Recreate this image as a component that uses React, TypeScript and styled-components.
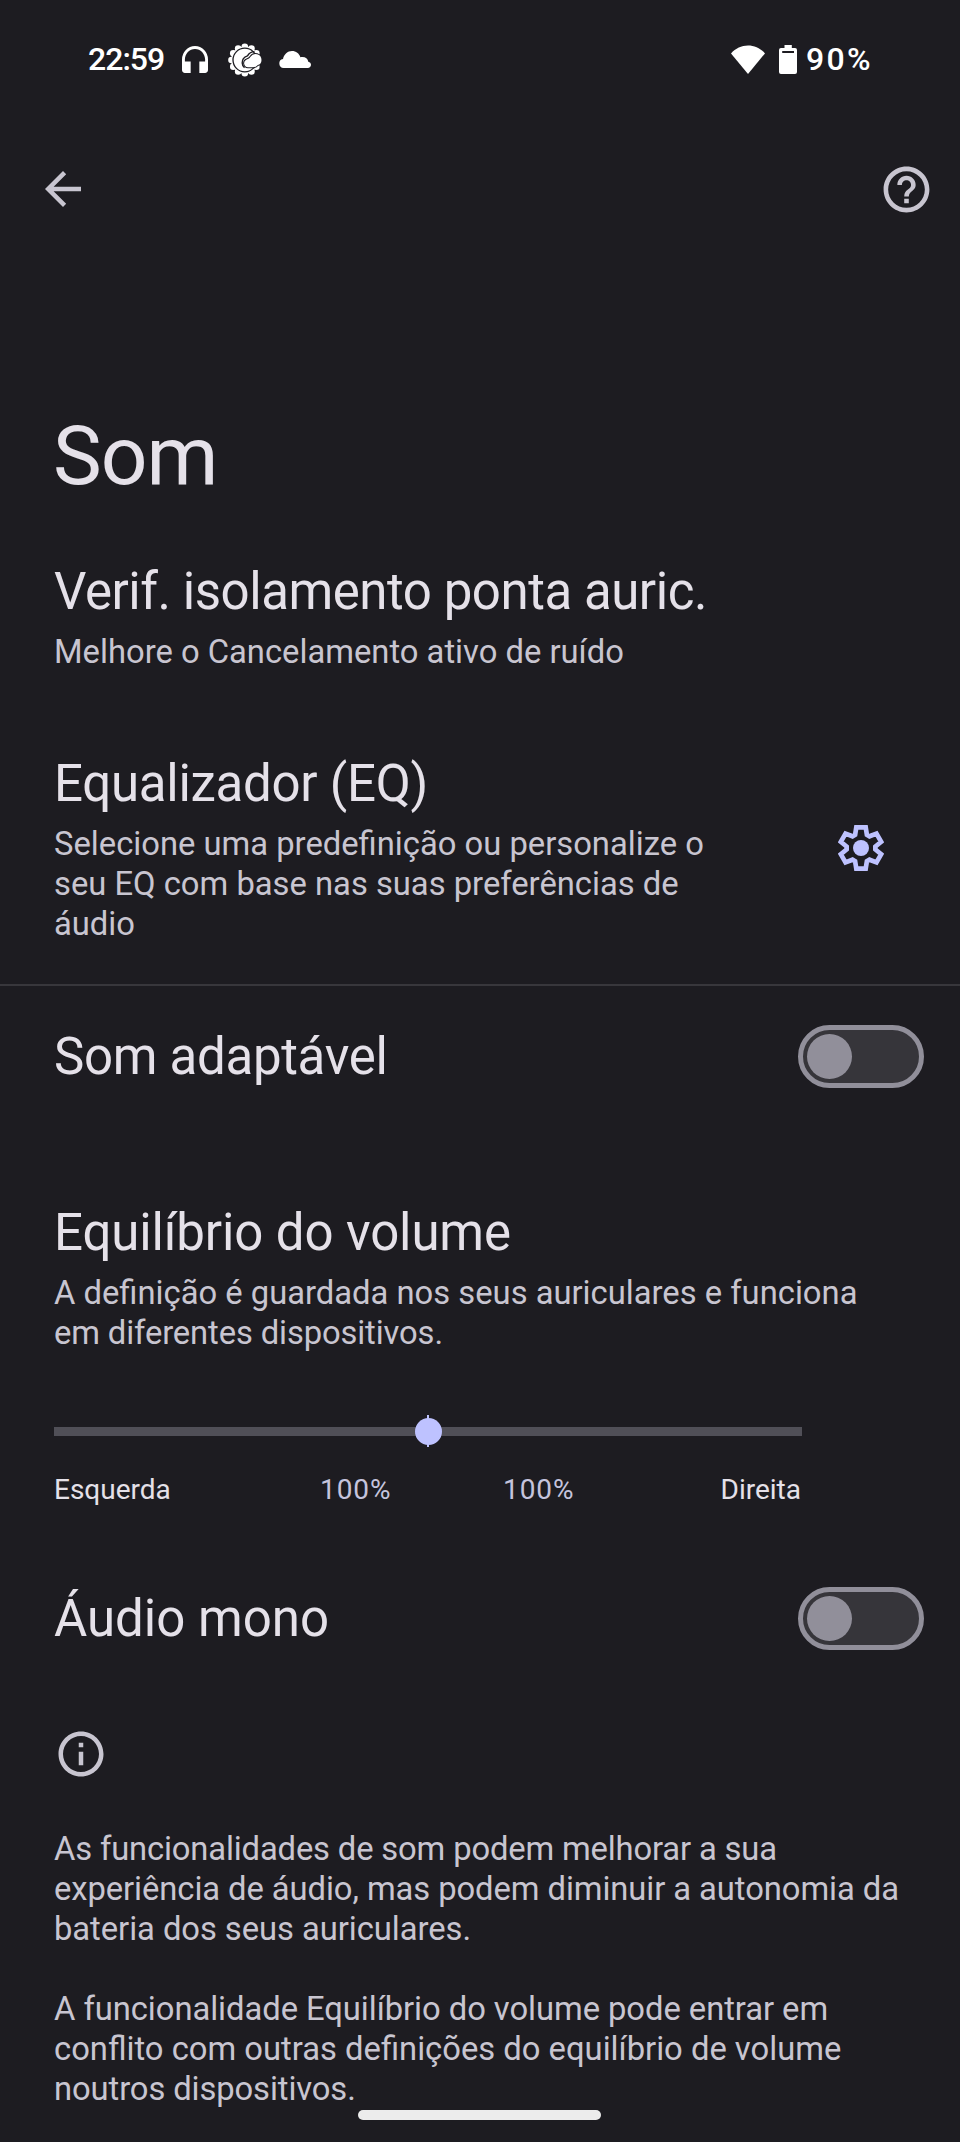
import React, { useState } from "react";
import styled, { createGlobalStyle } from "styled-components";

const color = {
  background: "#1d1c21",
  title: "#e5e1e9",
  body: "#c8c5d0",
  accent: "#bec2ff",
  value: "#c5c4dd",
  outline: "#918f9a",
  switchTrack: "#36353a",
  divider: "#38373c",
  sliderTrack: "#504f57",
};

const GlobalStyle = createGlobalStyle`
  *, *::before, *::after { box-sizing: border-box; }
  body {
    margin: 0;
    background: ${color.background};
    font-family: Roboto, "Liberation Sans", sans-serif;
  }
  h1, h2, p { margin: 0; font-weight: 400; }
  svg { display: block; flex: none; }
`;

const Screen = styled.div`
  position: relative;
  display: flex;
  flex-direction: column;
  width: 960px;
  height: 2142px;
  overflow: hidden;
  background: ${color.background};
`;

const StatusBar = styled.div`
  display: flex;
  justify-content: space-between;
  align-items: center;
  height: 118px;
  padding: 0 89px 0 88px;
  color: #fff;
  font-size: 32px;
  font-weight: 500;
  line-height: 40px;
`;

const StatusGroup = styled.div`
  display: flex;
  align-items: center;
`;

const Clock = styled.span`
  width: 94px;
  letter-spacing: -1px;
`;

const BatteryLevel = styled.span`
  width: 65px;
  margin-left: 9px;
  letter-spacing: 2.3px;
  white-space: nowrap;
`;

const AppBar = styled.header`
  display: flex;
  justify-content: space-between;
  align-items: center;
  height: 142px;
  padding: 0 26px 0 36px;
  color: ${color.body};
`;

const IconButton = styled.button`
  display: flex;
  padding: 0;
  border: 0;
  background: none;
  color: inherit;
`;

const PageTitle = styled.h1`
  margin: 148px 0 58px 53px;
  color: ${color.title};
  font-size: 82px;
  line-height: 96px;
  letter-spacing: -1px;
`;

const Setting = styled.section<{ $bottom: number }>`
  display: flex;
  padding: 0 0 ${(p) => p.$bottom}px 54px;
`;

const SettingText = styled.div<{ $width?: number }>`
  display: flex;
  flex-direction: column;
  gap: 10px;
  width: ${(p) => (p.$width ? `${p.$width}px` : "auto")};
`;

const Heading = styled.h2<{ $tracking?: number }>`
  color: ${color.title};
  font-size: 51px;
  line-height: 60px;
  letter-spacing: ${(p) => (p.$tracking ? `${p.$tracking}px` : "normal")};
  white-space: nowrap;
`;

const Copy = styled.p`
  color: ${color.body};
  font-size: 32.75px;
  line-height: 40px;
`;

const Line = styled.span<{ $tracking?: number }>`
  display: block;
  letter-spacing: ${(p) => (p.$tracking ? `${p.$tracking}px` : "normal")};
  white-space: nowrap;
`;

const GearSlot = styled.div`
  display: flex;
  align-items: center;
  width: 46px;
  margin-left: 44px;
  padding-bottom: 3px;
`;

const Divider = styled.hr`
  width: 100%;
  height: 2px;
  margin: 0 0 39px;
  border: 0;
  background: ${color.divider};
`;

const ToggleRow = styled.section<{ $bottom: number }>`
  display: flex;
  justify-content: space-between;
  align-items: center;
  height: 63px;
  margin-bottom: ${(p) => p.$bottom}px;
  padding: 0 36px 0 54px;
`;

const SwitchTrack = styled.button<{ $on: boolean }>`
  display: flex;
  align-items: center;
  justify-content: ${(p) => (p.$on ? "flex-end" : "flex-start")};
  width: 126px;
  height: 63px;
  padding: 0 4px;
  border: 5px solid ${(p) => (p.$on ? color.accent : color.outline)};
  border-radius: 32px;
  background: ${color.switchTrack};
`;

const SwitchThumb = styled.span<{ $on: boolean }>`
  width: 45px;
  height: 45px;
  border-radius: 50%;
  background: ${(p) => (p.$on ? color.accent : color.outline)};
`;

const Balance = styled.div`
  display: flex;
  flex-direction: column;
  width: 748px;
  margin-left: 54px;
`;

const Slider = styled.div`
  display: grid;
  place-items: center;
  height: 32px;
  > * { grid-area: 1 / 1; }
`;

const SliderTrack = styled.div`
  width: 100%;
  height: 9px;
  background: ${color.sliderTrack};
`;

const SliderTick = styled.div`
  width: 2px;
  height: 32px;
  background: ${color.accent};
`;

const SliderThumb = styled.div`
  width: 27px;
  height: 27px;
  border-radius: 50%;
  background: ${color.accent};
`;

const BalanceLabels = styled.div`
  display: grid;
  grid-template-columns: 266px 183px 1fr auto;
  margin: 26px 0 80px;
  padding-right: 1px;
  color: ${color.title};
  font-size: 28px;
  line-height: 34px;
`;

const Percent = styled.span`
  color: ${color.value};
  letter-spacing: 0.9px;
`;

const InfoSection = styled.section`
  display: flex;
  flex-direction: column;
  gap: 40px;
  padding-left: 54px;
  color: ${color.body};
`;

const InfoIcon = styled.div`
  margin-bottom: 8px;
`;

const HomeBar = styled.div`
  position: absolute;
  left: 358px;
  top: 2110px;
  width: 243px;
  height: 10px;
  border-radius: 5px;
  background: #ececec;
`;

const HeadphonesIcon = styled.svg`
  margin-right: 20px;
`;
const SunIcon = styled.svg`
  margin: 2px 17px 0 0;
`;
const WifiIcon = styled.svg`
  margin-right: 14px;
`;

function Headphones() {
  return (
    <HeadphonesIcon width="26" height="27" viewBox="3 3 18 18" preserveAspectRatio="none" fill="#fff">
      <path d="M12 3a9 9 0 0 0-9 9v7c0 1.1.9 2 2 2h4v-7.6H5V12c0-3.87 3.13-7 7-7s7 3.13 7 7v1.4h-4V21h4c1.1 0 2-.9 2-2v-7a9 9 0 0 0-9-9z" />
    </HeadphonesIcon>
  );
}

const rays = Array.from({ length: 12 }, (_, i) => {
  const a = (i * Math.PI) / 6;
  return [16.8 + 13.3 * Math.sin(a), 17 - 13.3 * Math.cos(a)];
});

const smallCloud =
  "M20 24.3a4.1 4.1 0 0 1-1.3-7.9c1.9-.5 2.9-1.1 3.8-2.7a6 6 0 0 1 11 3.2c0 2.8-1.5 4.5-3.7 5.1-1.3 1.7-3.2 2.3-5.3 2.3z";

// Gap that curves from the small cloud up and around the sun's disc.
const swirl = "M26.5 8.6c-3.600 0-5.600 1.700-7 4.200-2.800 1-5.500 3.200-5.300 7.200.1 2 .9 3.700 2.300 4.800";

function SunCloud() {
  return (
    <SunIcon width="34" height="34" viewBox="0 0 34 34" fill="#fff">
      {rays.map(([x, y], i) => (
        <circle key={i} cx={x} cy={y} r="3.3" />
      ))}
      <circle cx="16.8" cy="17" r="13.6" />
      <circle cx="16.8" cy="17" r="11.8" fill="none" stroke={color.background} strokeWidth="1.3" />
      <path d={swirl} fill="none" stroke={color.background} strokeWidth="1.4" />
      <path d={smallCloud} stroke={color.background} strokeWidth="2" />
      <path d={smallCloud} />
    </SunIcon>
  );
}

function Cloud() {
  return (
    <svg width="32" height="17" viewBox="0 0 32 17" fill="#fff">
      <path d="M4.6 17a4.6 4.6 0 0 1-.6-9.1C5 3.4 8.6 0 13 0c4 0 7.2 2.4 8.4 6.2.7-.2 1.3-.3 2-.3 3.2 0 5.5 1.9 5.9 4.9 1.6.3 2.7 1.5 2.7 3 0 1.8-1.4 3.2-3.2 3.2z" />
    </svg>
  );
}

function Wifi() {
  return (
    <WifiIcon width="34" height="29" viewBox="0 0 34 29" fill="#fff">
      <path d="M17 29 0 8.4C4.5 3.4 10.5.5 17 .5s12.5 2.9 17 7.9z" />
    </WifiIcon>
  );
}

function Battery() {
  return (
    <svg width="18" height="29" viewBox="0 0 18 29" fill="#fff">
      <path d="M5.5 0h7.3v3H16a2 2 0 0 1 2 2v22a2 2 0 0 1-2 2H2a2 2 0 0 1-2-2V5a2 2 0 0 1 2-2h3.5z" />
      <path d="M3.2 6h11.8v2H3.2z" fill={color.background} />
    </svg>
  );
}

function BackArrow() {
  return (
    <svg width="54" height="54" viewBox="0 0 24 24" fill="currentColor">
      <path d="M20 11H7.83l5.59-5.59L12 4l-8 8 8 8 1.41-1.41L7.83 13H20v-2z" />
    </svg>
  );
}

function Help() {
  return (
    <svg width="55" height="55" viewBox="0 0 24 24" fill="currentColor">
      <path d="M11 18h2v-2h-2v2zm1-16C6.48 2 2 6.48 2 12s4.48 10 10 10 10-4.48 10-10S17.52 2 12 2zm0 18c-4.41 0-8-3.59-8-8s3.59-8 8-8 8 3.59 8 8-3.59 8-8 8zm0-14c-2.21 0-4 1.79-4 4h2c0-1.1.9-2 2-2s2 .9 2 2c0 2-3 1.75-3 5h2c0-2.25 3-2.5 3-5 0-2.21-1.79-4-4-4z" />
    </svg>
  );
}

function Info() {
  return (
    <svg width="54" height="54" viewBox="0 0 24 24" fill="currentColor">
      <path d="M11 7h2v2h-2zm0 4h2v6h-2zm1-9C6.48 2 2 6.48 2 12s4.48 10 10 10 10-4.48 10-10S17.52 2 12 2zm0 18c-4.41 0-8-3.59-8-8s3.59-8 8-8 8 3.59 8 8-3.59 8-8 8z" />
    </svg>
  );
}

// One tooth of the gear, repeated every 60 degrees.
const tooth = [[-5.9, -13.2], [-4.7, -20.6], [4.7, -20.6], [5.9, -13.2]];
const gearPoints = Array.from({ length: 6 }, (_, i) => {
  const c = Math.cos((i * Math.PI) / 3);
  const s = Math.sin((i * Math.PI) / 3);
  return tooth.map(([x, y]) => `${(x * c - y * s).toFixed(2)},${(x * s + y * c).toFixed(2)}`).join(" ");
}).join(" ");

function Gear() {
  return (
    <svg width="46" height="46" viewBox="-23 -23 46 46">
      <polygon points={gearPoints} fill="none" stroke={color.accent} strokeWidth="4.7" />
      <circle r="8" fill={color.accent} />
    </svg>
  );
}

function Toggle({ label }: { label: string }) {
  const [on, setOn] = useState(false);
  return (
    <SwitchTrack type="button" role="switch" aria-label={label} aria-checked={on} $on={on} onClick={() => setOn(!on)}>
      <SwitchThumb $on={on} />
    </SwitchTrack>
  );
}

export default function App() {
  return (
    <Screen>
      <GlobalStyle />
      <StatusBar>
        <StatusGroup>
          <Clock>22:59</Clock>
          <Headphones />
          <SunCloud />
          <Cloud />
        </StatusGroup>
        <StatusGroup>
          <Wifi />
          <Battery />
          <BatteryLevel>90%</BatteryLevel>
        </StatusGroup>
      </StatusBar>

      <AppBar>
        <IconButton aria-label="Voltar"><BackArrow /></IconButton>
        <IconButton aria-label="Ajuda"><Help /></IconButton>
      </AppBar>

      <PageTitle>Som</PageTitle>

      <Setting $bottom={82}>
        <SettingText>
          <Heading $tracking={-0.45}>Verif. isolamento ponta auric.</Heading>
          <Copy>Melhore o Cancelamento ativo de ruído</Copy>
        </SettingText>
      </Setting>

      <Setting $bottom={40}>
        <SettingText $width={740}>
          <Heading $tracking={-0.27}>Equalizador (EQ)</Heading>
          <Copy>
            <Line>Selecione uma predefinição ou personalize o</Line>
            <Line>seu EQ com base nas suas preferências de</Line>
            <Line>áudio</Line>
          </Copy>
        </SettingText>
        <GearSlot><Gear /></GearSlot>
      </Setting>

      <Divider />

      <ToggleRow $bottom={115}>
        <Heading $tracking={-0.3}>Som adaptável</Heading>
        <Toggle label="Som adaptável" />
      </ToggleRow>

      <Setting $bottom={62}>
        <SettingText>
          <Heading $tracking={-0.12}>Equilíbrio do volume</Heading>
          <Copy>
            <Line>A definição é guardada nos seus auriculares e funciona</Line>
            <Line $tracking={-0.12}>em diferentes dispositivos.</Line>
          </Copy>
        </SettingText>
      </Setting>

      <Balance>
        <Slider>
          <SliderTrack />
          <SliderTick />
          <SliderThumb />
        </Slider>
        <BalanceLabels>
          <span>Esquerda</span>
          <Percent>100%</Percent>
          <Percent>100%</Percent>
          <span>Direita</span>
        </BalanceLabels>
      </Balance>

      <ToggleRow $bottom={77}>
        <Heading>Áudio mono</Heading>
        <Toggle label="Áudio mono" />
      </ToggleRow>

      <InfoSection>
        <InfoIcon><Info /></InfoIcon>
        <Copy>
          <Line $tracking={-0.15}>As funcionalidades de som podem melhorar a sua</Line>
          <Line $tracking={-0.07}>experiência de áudio, mas podem diminuir a autonomia da</Line>
          <Line $tracking={-0.05}>bateria dos seus auriculares.</Line>
        </Copy>
        <Copy>
          <Line $tracking={-0.05}>A funcionalidade Equilíbrio do volume pode entrar em</Line>
          <Line>conflito com outras definições do equilíbrio de volume</Line>
          <Line $tracking={-0.1}>noutros dispositivos.</Line>
        </Copy>
      </InfoSection>

      <HomeBar />
    </Screen>
  );
}
